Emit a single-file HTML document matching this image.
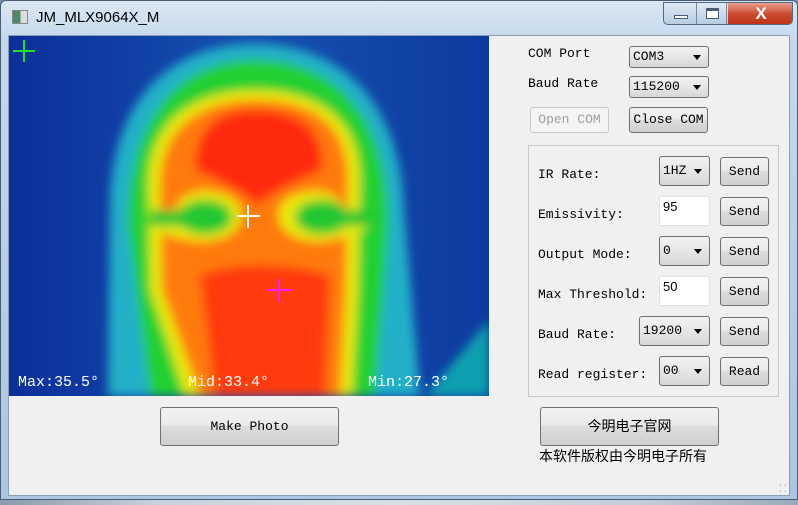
<!DOCTYPE html>
<html><head><meta charset="utf-8"><style>
*{margin:0;padding:0;box-sizing:border-box}
body{width:798px;height:505px;overflow:hidden;background:#6f8fb0;position:relative;font-family:"Liberation Mono",monospace;font-size:13px;color:#000}
.abs{position:absolute}
.frame{left:0;top:0;width:798px;height:500px;background:linear-gradient(#dbe7f3,#c4d8eb 40px,#aac6e2);border:1px solid #4a5d72;border-radius:6px 6px 0 0}
.client{left:8px;top:35px;width:782px;height:461px;background:#f0f0f0;border:1px solid #8aa0b8}
.title{left:36px;top:9px;font-family:"Liberation Sans",sans-serif;font-size:15px;color:#000}
.btn{position:absolute;border:1px solid #707070;border-radius:3px;background:linear-gradient(#f2f2f2,#ebebeb 45%,#dddddd 50%,#cfcfcf);text-align:center;font-size:13px}
.combo{position:absolute;border:1px solid #707070;border-radius:3px;background:linear-gradient(#f2f2f2,#e6e6e6 50%,#d6d6d6);font-size:13px;padding-left:3px}
.combo:after{content:"";position:absolute;right:7px;top:50%;margin-top:-2px;border-left:4px solid transparent;border-right:4px solid transparent;border-top:5px solid #000}
.edit{position:absolute;background:#fff;border:1px solid #e3e3e3;font-family:"Liberation Sans",sans-serif;font-size:13px;padding:2px 3px}
.lbl{position:absolute;font-size:13px}
.tl{position:absolute;color:#fff;font-family:"Liberation Mono",monospace;font-size:15px}
</style></head><body>
<div class="abs frame"></div>
<div class="abs" style="left:12px;top:10px;width:16px;height:14px;background:linear-gradient(90deg,#4a8a6a 55%,#ddd 55%);border:1px solid #888"></div>
<div class="abs title">JM_MLX9064X_M</div>
<div class="abs" style="left:663px;top:2px;width:130px;height:23px;border:1px solid #4f6a86;border-radius:0 0 5px 5px;overflow:hidden;background:linear-gradient(#dfe9f4,#b8cde2)">
 <div class="abs" style="left:0;top:0;width:33px;height:22px;border-right:1px solid #6f89a5"><div class="abs" style="left:10px;top:12px;width:14px;height:4px;background:#fff;border:1px solid #4a5d72"></div></div>
 <div class="abs" style="left:34px;top:0;width:29px;height:22px;border-right:1px solid #6f89a5"><div class="abs" style="left:8px;top:5px;width:13px;height:11px;border:1px solid #4a5d72;border-top:3px solid #4a5d72;background:#fff"></div></div>
 <div class="abs" style="left:64px;top:0;width:66px;height:22px;background:linear-gradient(#e9a08e,#cc4a30 50%,#c03018);color:#fff;font:bold 17px 'Liberation Sans',sans-serif;text-align:center;line-height:22px">X</div>
</div>
<div class="abs client"></div>
<svg class="abs" style="left:9px;top:36px" width="480" height="360" viewBox="9 36 480 360">
<defs><filter id="b" x="-20%" y="-20%" width="140%" height="140%"><feGaussianBlur stdDeviation="5"/></filter>
<linearGradient id="bg" x1="0" y1="0" x2="1" y2="0"><stop offset="0" stop-color="#0c2f9a"/><stop offset=".5" stop-color="#1550b0"/><stop offset="1" stop-color="#0e3aa0"/></linearGradient></defs>
<rect x="9" y="36" width="480" height="360" fill="url(#bg)"/>
<g filter="url(#b)">
<path d="M425,396 L489,320 L489,396Z" fill="#10a0b0"/>
<path d="M108,396 L110,210 C110,100 170,44 255,44 C340,44 400,100 404,210 L420,396 Z" fill="#20b0c8"/>
<path d="M150,396 L128,225 C128,110 185,60 255,60 C330,60 388,110 388,225 L375,396 Z" fill="#20d030"/>
<path d="M185,396 L150,290 L148,185 C148,120 195,90 255,90 C320,90 362,120 360,185 L358,290 L352,396 Z" fill="#e8e810"/>
<path d="M200,396 L162,290 L160,185 C160,128 200,100 255,100 C315,100 350,125 348,185 L346,290 L340,396 Z" fill="#ff7a10"/>
<path d="M195,170 C195,125 220,110 255,110 C295,110 325,125 322,170 C300,180 275,190 258,205 C240,190 215,178 195,170Z" fill="#ff2a10"/>
<path d="M215,396 L200,275 C230,262 290,262 330,275 L325,396 Z" fill="#ff3a10"/>
<path d="M175,216 C175,196 195,188 215,192 C238,196 245,210 240,222 C235,238 210,244 190,240 C165,236 150,230 148,218 Z" fill="#e8e810"/>
<path d="M345,216 C345,196 325,188 305,192 C282,196 275,210 280,222 C285,238 310,244 330,240 C355,236 370,230 372,218 Z" fill="#e8e810"/>
<ellipse cx="205" cy="217" rx="27" ry="17" fill="#20c830"/>
<ellipse cx="322" cy="217" rx="27" ry="17" fill="#20c830"/>
<rect x="150" y="210" width="35" height="16" fill="#20c830"/>
<rect x="340" y="210" width="35" height="16" fill="#20c830"/>
</g>
<g stroke-width="2"><path d="M13,51 H35 M24,40 V62" stroke="#20e020"/>
<path d="M237,216 H260 M248,205 V228" stroke="#fff"/>
<path d="M268,290 H291 M279,279 V302" stroke="#ff20ff"/></g>
</svg>
<div class="tl" style="left:18px;top:374px">Max:35.5°</div>
<div class="tl" style="left:188px;top:374px">Mid:33.4°</div>
<div class="tl" style="left:368px;top:374px">Min:27.3°</div>

<div class="lbl" style="left:528px;top:46px">COM Port</div>
<div class="combo" style="left:629px;top:46px;width:80px;height:22px;line-height:20px">COM3</div>
<div class="lbl" style="left:528px;top:76px">Baud Rate</div>
<div class="combo" style="left:629px;top:76px;width:80px;height:22px;line-height:20px">115200</div>
<div class="btn" style="left:530px;top:107px;width:79px;height:26px;line-height:24px;color:#a0a0a0;background:#f4f4f4;border-color:#c8c8c8">Open COM</div>
<div class="btn" style="left:629px;top:107px;width:79px;height:26px;line-height:24px">Close COM</div>

<div class="abs" style="left:528px;top:145px;width:251px;height:252px;border:1px solid #c8c8c8"></div>
<div class="lbl" style="left:538px;top:167px">IR Rate:</div>
<div class="combo" style="left:659px;top:156px;width:51px;height:30px;line-height:28px">1HZ</div>
<div class="btn" style="left:720px;top:157px;width:49px;height:29px;line-height:27px">Send</div>
<div class="lbl" style="left:538px;top:207px">Emissivity:</div>
<div class="edit" style="left:659px;top:196px;width:51px;height:30px">95</div>
<div class="btn" style="left:720px;top:197px;width:49px;height:29px;line-height:27px">Send</div>
<div class="lbl" style="left:538px;top:247px">Output Mode:</div>
<div class="combo" style="left:659px;top:236px;width:51px;height:30px;line-height:28px">0</div>
<div class="btn" style="left:720px;top:237px;width:49px;height:29px;line-height:27px">Send</div>
<div class="lbl" style="left:538px;top:287px">Max Threshold:</div>
<div class="edit" style="left:659px;top:276px;width:51px;height:30px">50</div>
<div class="btn" style="left:720px;top:277px;width:49px;height:29px;line-height:27px">Send</div>
<div class="lbl" style="left:538px;top:327px">Baud Rate:</div>
<div class="combo" style="left:639px;top:316px;width:71px;height:30px;line-height:28px">19200</div>
<div class="btn" style="left:720px;top:317px;width:49px;height:29px;line-height:27px">Send</div>
<div class="lbl" style="left:538px;top:367px">Read register:</div>
<div class="combo" style="left:659px;top:356px;width:51px;height:30px;line-height:28px">00</div>
<div class="btn" style="left:720px;top:357px;width:49px;height:29px;line-height:27px">Read</div>

<div class="btn" style="left:160px;top:407px;width:179px;height:39px;line-height:37px">Make Photo</div>
<div class="btn" style="left:540px;top:407px;width:179px;height:39px;line-height:37px;font-family:'Liberation Sans','Noto Sans CJK SC',sans-serif;font-size:14px">今明电子官网</div>
<div class="abs" style="left:539px;top:446px;font-family:'Liberation Sans','Noto Sans CJK SC',sans-serif;font-size:14px">本软件版权由今明电子所有</div>
<div class="abs" style="left:778px;top:482px;font-size:8px;color:#999;line-height:6px">..<br>...</div>
<div class="abs" style="left:0;top:500px;width:798px;height:5px;background:linear-gradient(90deg,#8a9aaa,#c8d2dc 20%,#d8dfe6 50%,#c4ced8 80%,#9aaaba)"></div>
</body></html>
